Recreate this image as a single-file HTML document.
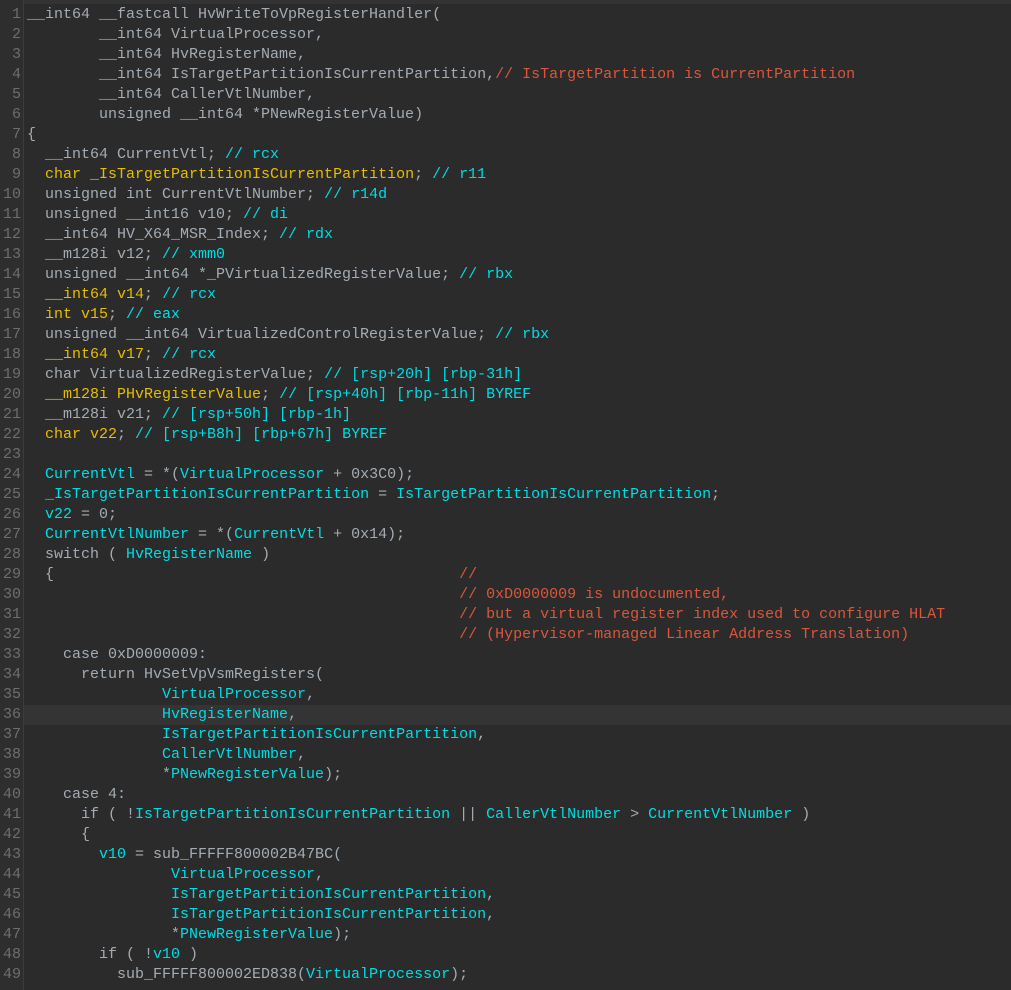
<!DOCTYPE html>
<html><head><meta charset="utf-8"><style>
html,body{margin:0;padding:0;background:#2b2b2b;width:1011px;height:990px;overflow:hidden}
#top{position:absolute;left:0;top:0;width:1011px;height:4px;background:#333333}
#gut{position:absolute;left:0;top:0;width:23px;height:990px;background:#2e2e2e;border-right:1px solid #3c3c3c}
#hl{position:absolute;left:24px;top:705px;width:987px;height:20px;background:#343434}
.nums,.code{position:absolute;top:5px;font-family:"Liberation Mono",monospace;font-size:15px;line-height:20px;white-space:pre;margin:0}
.nums{left:0;width:21px;text-align:right;color:#6e6e6e}
.code{left:27px;color:#a3acb4}
.c{color:#00dce4}.y{color:#e6bd00}.r{color:#d9573b}
</style></head><body>
<div id="top"></div><div id="gut"></div><div id="hl"></div>
<pre class="nums">1
2
3
4
5
6
7
8
9
10
11
12
13
14
15
16
17
18
19
20
21
22
23
24
25
26
27
28
29
30
31
32
33
34
35
36
37
38
39
40
41
42
43
44
45
46
47
48
49</pre>
<pre class="code">__int64 __fastcall HvWriteToVpRegisterHandler(
        __int64 VirtualProcessor,
        __int64 HvRegisterName,
        __int64 IsTargetPartitionIsCurrentPartition,<span class="r">// IsTargetPartition is CurrentPartition</span>
        __int64 CallerVtlNumber,
        unsigned __int64 *PNewRegisterValue)
{
  __int64 CurrentVtl; <span class="c">// rcx</span>
  <span class="y">char _IsTargetPartitionIsCurrentPartition</span>; <span class="c">// r11</span>
  unsigned int CurrentVtlNumber; <span class="c">// r14d</span>
  unsigned __int16 v10; <span class="c">// di</span>
  __int64 HV_X64_MSR_Index; <span class="c">// rdx</span>
  __m128i v12; <span class="c">// xmm0</span>
  unsigned __int64 *_PVirtualizedRegisterValue; <span class="c">// rbx</span>
  <span class="y">__int64 v14</span>; <span class="c">// rcx</span>
  <span class="y">int v15</span>; <span class="c">// eax</span>
  unsigned __int64 VirtualizedControlRegisterValue; <span class="c">// rbx</span>
  <span class="y">__int64 v17</span>; <span class="c">// rcx</span>
  char VirtualizedRegisterValue; <span class="c">// [rsp+20h] [rbp-31h]</span>
  <span class="y">__m128i PHvRegisterValue</span>; <span class="c">// [rsp+40h] [rbp-11h] BYREF</span>
  __m128i v21; <span class="c">// [rsp+50h] [rbp-1h]</span>
  <span class="y">char v22</span>; <span class="c">// [rsp+B8h] [rbp+67h] BYREF</span>

  <span class="c">CurrentVtl</span> = *(<span class="c">VirtualProcessor</span> + 0x3C0);
  <span class="c">_IsTargetPartitionIsCurrentPartition</span> = <span class="c">IsTargetPartitionIsCurrentPartition</span>;
  <span class="c">v22</span> = 0;
  <span class="c">CurrentVtlNumber</span> = *(<span class="c">CurrentVtl</span> + 0x14);
  switch ( <span class="c">HvRegisterName</span> )
  {                                             <span class="r">//</span>
                                                <span class="r">// 0xD0000009 is undocumented,</span>
                                                <span class="r">// but a virtual register index used to configure HLAT</span>
                                                <span class="r">// (Hypervisor-managed Linear Address Translation)</span>
    case 0xD0000009:
      return HvSetVpVsmRegisters(
               <span class="c">VirtualProcessor</span>,
               <span class="c">HvRegisterName</span>,
               <span class="c">IsTargetPartitionIsCurrentPartition</span>,
               <span class="c">CallerVtlNumber</span>,
               *<span class="c">PNewRegisterValue</span>);
    case 4:
      if ( !<span class="c">IsTargetPartitionIsCurrentPartition</span> || <span class="c">CallerVtlNumber</span> &gt; <span class="c">CurrentVtlNumber</span> )
      {
        <span class="c">v10</span> = sub_FFFFF800002B47BC(
                <span class="c">VirtualProcessor</span>,
                <span class="c">IsTargetPartitionIsCurrentPartition</span>,
                <span class="c">IsTargetPartitionIsCurrentPartition</span>,
                *<span class="c">PNewRegisterValue</span>);
        if ( !<span class="c">v10</span> )
          sub_FFFFF800002ED838(<span class="c">VirtualProcessor</span>);</pre>
</body></html>
